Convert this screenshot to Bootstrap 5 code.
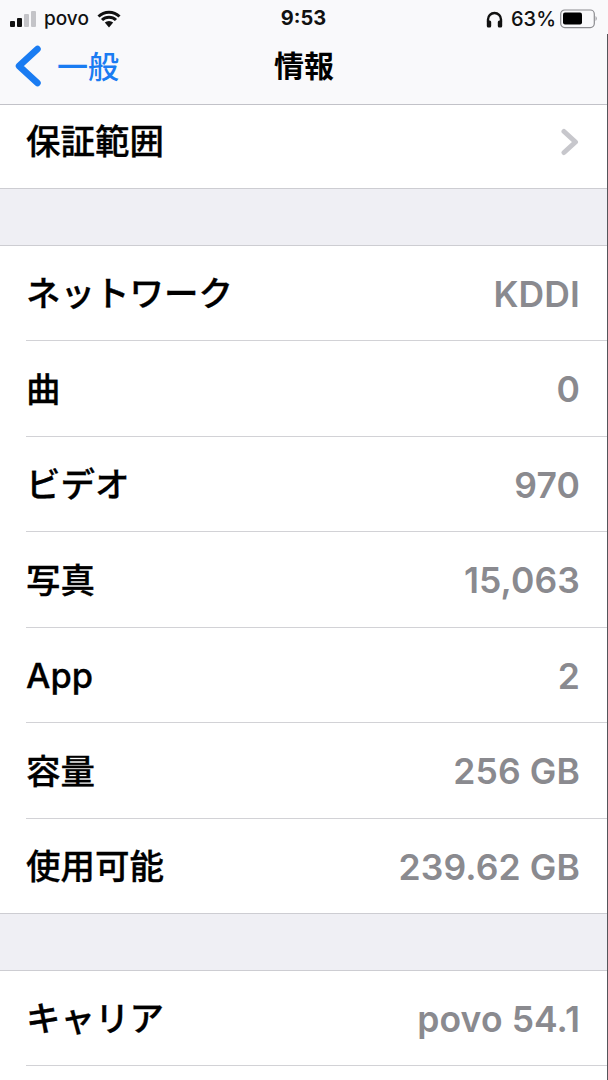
<!DOCTYPE html>
<html lang="ja">
<head>
    <meta charset="UTF-8">
    <meta name="viewport" content="width=device-width, initial-scale=1">
    <title>情報</title>
    <link rel="stylesheet" href="https://cdn.jsdelivr.net/npm/bootstrap@5.3.0/dist/css/bootstrap.min.css">
    <script src="https://cdn.jsdelivr.net/npm/bootstrap@5.3.0/dist/js/bootstrap.bundle.min.js"></script>
    <style>
        html, body { height: 1080px; overflow: hidden; }
        body {
            background: #efeff4;
            font-family: Inter, "Noto Sans CJK JP", sans-serif;
            color: #000;
        }
        .status-bar {
            height: 32px;
            padding: 6px 11px 0 10px;
            background: #f9f9fb;
            font-size: 19px;
            font-weight: 500;
            line-height: 24px;
            color: #111;
        }
        .status-bar svg { display: block; }
        .status-side { width: 240px; }
        .status-time { font-size: 20px; font-weight: 700; }
        .status-pct { font-size: 20px; }
        .signal-icon { margin-right: 6px; }
        .nav-head {
            height: 73px;
            padding: 0 14px 4px;
            background: #f9f9fb;
            border-bottom: 1px solid #c2c2c8;
        }
        .back-text { color: #1a7cf2; font-size: 31px; font-weight: 500; line-height: 1; margin-left: 15px; }
        .nav-name {
            left: 0;
            right: 0;
            top: 0;
            bottom: 4px;
            font-size: 30px;
            font-weight: 700;
        }
        .cell-group { background: #fff; }
        .cell-row {
            height: 95.5px;
            padding-top: 3px;
            padding-right: 28px;
            margin-left: 26px;
            font-size: 34.500px;
            font-weight: 500;
            border-bottom: 1px solid #d2d2d6;
            -webkit-text-stroke: .3px #000;
        }
        .cell-row.first-row { height: 83px; padding-top: 0; padding-bottom: 10px; }
        .cell-row.end-row { height: 94.500px; border-bottom: 0; }
        .cell-row.tail-row { height: 14px; border-bottom: 0; }
        .cell-value {
            color: #8a8a8f;
            font-size: 35.500px;
            font-weight: 600;
            letter-spacing: .1px;
            -webkit-text-stroke: 0;
        }
        .group-gap {
            height: 57.500px;
            border-top: 1px solid #cdcdd2;
            border-bottom: 1px solid #cdcdd2;
        }
        .screen-edge {
            top: 34px;
            right: 0;
            bottom: 0;
            width: 1px;
            background: #55555a;
        }
    </style>
</head>
<body>
    <div class="status-bar d-flex justify-content-between">
        <div class="status-side d-flex align-items-center">
            <svg width="28" height="18" viewBox="0 0 28 18" class="signal-icon">
                <rect x="0" y="11" width="5" height="6" rx="1" fill="#111"/>
                <rect x="7" y="8" width="5" height="9" rx="1" fill="#111"/>
                <rect x="14" y="4" width="5" height="13" rx="1" fill="#c4c4c8"/>
                <rect x="21" y="1" width="5" height="16" rx="1" fill="#c4c4c8"/>
            </svg>
            <span>povo</span>
            <svg width="24" height="18" viewBox="0 0 24 18" class="ms-2">
                <path d="M1.500 6.500a15 15 0 0 1 21 0M5 10a10 10 0 0 1 14 0" fill="none" stroke="#111" stroke-width="3"/>
                <path d="M7.800 12.600l4.200 4.900 4.200-4.900a6 6 0 0 0-8.400 0z" fill="#111"/>
            </svg>
        </div>
        <div class="status-time">9:53</div>
        <div class="status-side d-flex align-items-center justify-content-end">
            <svg width="17" height="17" viewBox="0 0 17 17" class="me-2">
                <path d="M2 11V8.500a6.500 6.500 0 0 1 13 0V11" fill="none" stroke="#111" stroke-width="2.400"/>
                <rect x="0.800" y="9.500" width="4.400" height="7" rx="1.500" fill="#111"/>
                <rect x="11.800" y="9.500" width="4.400" height="7" rx="1.500" fill="#111"/>
            </svg>
            <span class="status-pct me-1">63%</span>
            <svg width="37" height="20" viewBox="0 0 37 20">
                <rect x="0.700" y="1" width="33.600" height="17.600" rx="4" fill="none" stroke="#8b8b8f" stroke-width="1.200"/>
                <rect x="3" y="3.500" width="19" height="12" rx="2" fill="#000"/>
                <path d="M35.500 7a3 3 0 0 1 0 5z" fill="#a5a5a9"/>
            </svg>
        </div>
    </div>

    <div class="nav-head position-relative d-flex align-items-center">
        <svg width="28" height="42" viewBox="0 0 28 42">
            <path d="M23.500 4L5 21l18.500 17" fill="none" stroke="#1a7cf2" stroke-width="6.500" stroke-linecap="round" stroke-linejoin="round"/>
        </svg>
        <span class="back-text">一般</span>
        <div class="nav-name position-absolute d-flex align-items-center justify-content-center">情報</div>
    </div>

    <div class="cell-group">
        <div class="cell-row first-row d-flex justify-content-between align-items-center border-0">
            <span>保証範囲</span>
            <svg width="20" height="28" viewBox="0 0 20 28">
                <path d="M4 3.500L15.500 14 4 24.500" fill="none" stroke="#c7c7cc" stroke-width="5" stroke-linecap="round" stroke-linejoin="round"/>
            </svg>
        </div>
    </div>
    <div class="group-gap"></div>
    <div class="cell-group">
        <div class="cell-row d-flex justify-content-between align-items-center"><span>ネットワーク</span><span class="cell-value">KDDI</span></div>
        <div class="cell-row d-flex justify-content-between align-items-center"><span>曲</span><span class="cell-value">0</span></div>
        <div class="cell-row d-flex justify-content-between align-items-center"><span>ビデオ</span><span class="cell-value">970</span></div>
        <div class="cell-row d-flex justify-content-between align-items-center"><span>写真</span><span class="cell-value">15,063</span></div>
        <div class="cell-row d-flex justify-content-between align-items-center"><span>App</span><span class="cell-value">2</span></div>
        <div class="cell-row d-flex justify-content-between align-items-center"><span>容量</span><span class="cell-value">256 GB</span></div>
        <div class="cell-row end-row d-flex justify-content-between align-items-center"><span>使用可能</span><span class="cell-value">239.62 GB</span></div>
    </div>
    <div class="group-gap"></div>
    <div class="cell-group">
        <div class="cell-row d-flex justify-content-between align-items-center"><span>キャリア</span><span class="cell-value">povo 54.1</span></div>
        <div class="cell-row tail-row"></div>
    </div>
    <div class="screen-edge position-absolute"></div>
</body>
</html>
